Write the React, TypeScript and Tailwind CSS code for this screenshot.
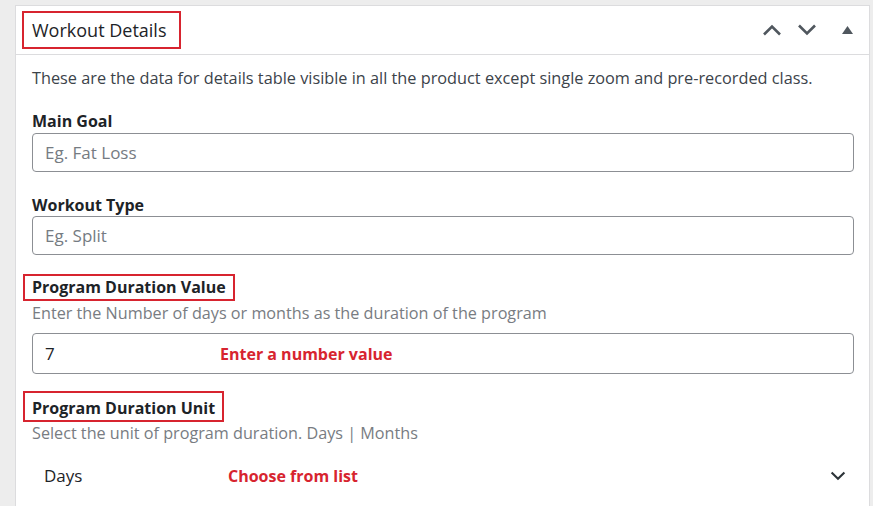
const Chevron = ({ up = false, className = '' }: { up?: boolean; className?: string }) => (
  <svg width="20" height="12" viewBox="0 0 20 12" className={className}>
    <path
      d={up ? 'M2 10.5 L10 2.5 L18 10.5' : 'M2 1.5 L10 9.5 L18 1.5'}
      fill="none"
      stroke="currentColor"
      strokeWidth="2.6"
    />
  </svg>
)

export default function App() {
  return (
    <div className="w-[873px] h-[506px] overflow-hidden bg-[#ededed] pt-[5px] pl-[15px] pr-[3px] font-['Open_Sans',sans-serif] text-[#1d2327]">
      <div className="bg-white border border-[#dcdcde] border-b-0 h-full">
        <header className="h-[49px] flex items-center justify-between border-b border-[#dcdcde] pl-[6px] pr-[16px]">
          <h2 className="h-[38px] -mt-[1px] flex items-center border-2 border-[#d7242f] pl-[8px] pr-[13px] text-[18px] leading-none">
            Workout Details
          </h2>
          <div className="flex items-center text-[#50575e]">
            <Chevron up className="mr-[15px]" />
            <Chevron className="mr-[25px]" />
            <svg width="11" height="8" viewBox="0 0 11 8">
              <path d="M5.5 0 L11 8 L0 8 Z" fill="#50575e" />
            </svg>
          </div>
        </header>
        <div className="pl-[16px] pr-[15px] pt-[12px] text-[16px]">
          <p className="leading-[22px] text-[16.3px] text-[#3c434a]">
            These are the data for details table visible in all the product except single zoom and pre-recorded class.
          </p>

          <label className="block mt-[22px] font-bold leading-[20px]">Main Goal</label>
          <div className="mt-[2px] h-[39px] border border-[#8c8f94] rounded-[4px] flex items-center pl-[12px] text-[17px] text-[#757b82]">
            Eg. Fat Loss
          </div>

          <label className="block mt-[23px] font-bold leading-[20px]">Workout Type</label>
          <div className="mt-[1px] h-[39px] border border-[#8c8f94] rounded-[4px] flex items-center pl-[12px] text-[17px] text-[#757b82]">
            Eg. Split
          </div>

          <div className="mt-[19px]">
            <span className="inline-block -ml-[9px] border-2 border-[#d7242f] pl-[7px] pr-[7px] h-[27px] leading-[23px] font-bold">
              Program Duration Value
            </span>
          </div>
          <p className="leading-[22px] mt-[1px] text-[16.2px] text-[#787c82]">Enter the Number of days or months as the duration of the program</p>
          <div className="mt-[9px] h-[41px] border border-[#8c8f94] rounded-[4px] flex items-center pl-[12px] text-[17px]">
            <span className="w-[175px]">7</span>
            <span className="font-bold text-[16px] text-[#d7242f]">Enter a number value</span>
          </div>

          <div className="mt-[17px]">
            <span className="inline-block -ml-[9px] border-2 border-[#d7242f] pl-[7px] pr-[7px] h-[31px] leading-[31px] font-bold">
              Program Duration Unit
            </span>
          </div>
          <p className="leading-[22px] mt-[0px] text-[16.2px] text-[#787c82]">Select the unit of program duration. Days | Months</p>
          <div className="mt-[20px] flex items-center h-[24px] pl-[12px] pr-[8px] text-[17px]">
            <span className="w-[184px]">Days</span>
            <span className="font-bold text-[16px] text-[#d7242f]">Choose from list</span>
            <Chevron className="ml-auto text-[#2c3338] w-[16px]" />
          </div>
        </div>
      </div>
    </div>
  )
}
